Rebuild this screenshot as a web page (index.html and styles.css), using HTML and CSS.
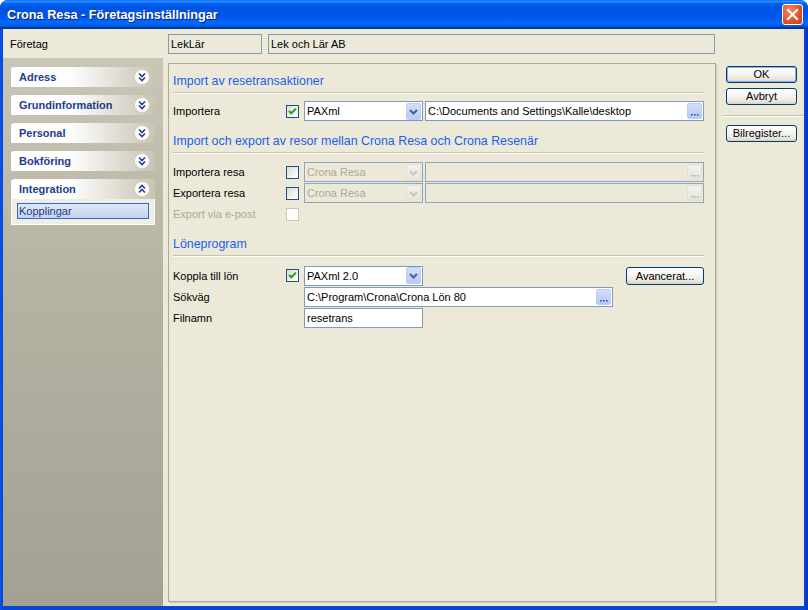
FILE: index.html
```html
<!DOCTYPE html>
<html lang="sv">
<head>
<meta charset="utf-8">
<title>Crona Resa - Företagsinställningar</title>
<link rel="stylesheet" href="styles.css">
</head>
<body>
<div class="window">
  <div class="titlebar">
    <span class="title">Crona Resa - Företagsinställningar</span>
    <div class="close"><svg width="19" height="19" viewBox="0 0 19 19"><path d="M5 5 L14 14 M14 5 L5 14" stroke="#fff" stroke-width="2.2" stroke-linecap="square"/></svg></div>
  </div>
  <div class="client">
    <div class="companyrow">
      <span class="company-label">Företag</span>
      <div class="ro-field code">LekLär</div>
      <div class="ro-field name">Lek och Lär AB</div>
    </div>
    <div class="body">
      <aside class="sidebar">
        <div class="group">
          <div class="group-head"><span>Adress</span><svg class="chev" width="16" height="16" viewBox="0 0 16 16"><circle cx="8" cy="8" r="7.5" fill="#fff" stroke="#d2cfbf"/><path d="M5 4.5 L8 7.5 L11 4.5 M5 8.5 L8 11.5 L11 8.5" fill="none" stroke="#21418f" stroke-width="1.6"/></svg></div>
        </div>
        <div class="group">
          <div class="group-head"><span>Grundinformation</span><svg class="chev" width="16" height="16" viewBox="0 0 16 16"><circle cx="8" cy="8" r="7.5" fill="#fff" stroke="#d2cfbf"/><path d="M5 4.5 L8 7.5 L11 4.5 M5 8.5 L8 11.5 L11 8.5" fill="none" stroke="#21418f" stroke-width="1.6"/></svg></div>
        </div>
        <div class="group">
          <div class="group-head"><span>Personal</span><svg class="chev" width="16" height="16" viewBox="0 0 16 16"><circle cx="8" cy="8" r="7.5" fill="#fff" stroke="#d2cfbf"/><path d="M5 4.5 L8 7.5 L11 4.5 M5 8.5 L8 11.5 L11 8.5" fill="none" stroke="#21418f" stroke-width="1.6"/></svg></div>
        </div>
        <div class="group">
          <div class="group-head"><span>Bokföring</span><svg class="chev" width="16" height="16" viewBox="0 0 16 16"><circle cx="8" cy="8" r="7.5" fill="#fff" stroke="#d2cfbf"/><path d="M5 4.5 L8 7.5 L11 4.5 M5 8.5 L8 11.5 L11 8.5" fill="none" stroke="#21418f" stroke-width="1.6"/></svg></div>
        </div>
        <div class="group">
          <div class="group-head"><span>Integration</span><svg class="chev" width="16" height="16" viewBox="0 0 16 16"><circle cx="8" cy="8" r="7.5" fill="#fff" stroke="#d2cfbf"/><path d="M5 7.5 L8 4.5 L11 7.5 M5 11.5 L8 8.5 L11 11.5" fill="none" stroke="#21418f" stroke-width="1.6"/></svg></div>
          <div class="group-body"><div class="item selected">Kopplingar</div></div>
        </div>
      </aside>

      <main class="content">
        <div class="panel">
          <section class="section first">
            <h2 class="heading">Import av resetransaktioner</h2>
            <div class="sep"></div>
            <div class="rows">
              <div class="row">
                <span class="lbl">Importera</span>
                <span class="cb"><svg width="13" height="13" viewBox="0 0 13 13"><path d="M3 6 L5.3 8.3 L10 3.6" fill="none" stroke="#21a121" stroke-width="2"/></svg></span>
                <div class="combo"><span class="val">PAXml</span><span class="dd"><svg width="15" height="17" viewBox="0 0 15 17"><path d="M4 7 L7.5 10.5 L11 7" fill="none" stroke="#4d6185" stroke-width="2"/></svg></span></div>
                <div class="field path"><span class="val">C:\Documents and Settings\Kalle\desktop</span><span class="ell"><svg width="15" height="16" viewBox="0 0 15 16"><path d="M4 11h1.5v1.5H4z M7 11h1.5v1.5H7z M10 11h1.5v1.5H10z" fill="#2b4a8c"/></svg></span></div>
              </div>
            </div>
          </section>

          <section class="section">
            <h2 class="heading">Import och export av resor mellan Crona Resa och Crona Resenär</h2>
            <div class="sep"></div>
            <div class="rows">
              <div class="row">
                <span class="lbl">Importera resa</span>
                <span class="cb"></span>
                <div class="combo disabled"><span class="val">Crona Resa</span><span class="dd"><svg width="15" height="17" viewBox="0 0 15 17"><path d="M4 7 L7.5 10.5 L11 7" fill="none" stroke="#c9c7ba" stroke-width="2"/></svg></span></div>
                <div class="field path disabled"><span class="val"></span><span class="ell"><svg width="15" height="16" viewBox="0 0 15 16"><path d="M4 11h1.5v1.5H4z M7 11h1.5v1.5H7z M10 11h1.5v1.5H10z" fill="#aca899"/></svg></span></div>
              </div>
              <div class="row">
                <span class="lbl">Exportera resa</span>
                <span class="cb"></span>
                <div class="combo disabled"><span class="val">Crona Resa</span><span class="dd"><svg width="15" height="17" viewBox="0 0 15 17"><path d="M4 7 L7.5 10.5 L11 7" fill="none" stroke="#c9c7ba" stroke-width="2"/></svg></span></div>
                <div class="field path disabled"><span class="val"></span><span class="ell"><svg width="15" height="16" viewBox="0 0 15 16"><path d="M4 11h1.5v1.5H4z M7 11h1.5v1.5H7z M10 11h1.5v1.5H10z" fill="#aca899"/></svg></span></div>
              </div>
              <div class="row">
                <span class="lbl dim">Export via e-post</span>
                <span class="cb off"></span>
              </div>
            </div>
          </section>

          <section class="section">
            <h2 class="heading">Löneprogram</h2>
            <div class="sep"></div>
            <div class="rows">
              <div class="row tall">
                <span class="lbl">Koppla till lön</span>
                <span class="cb"><svg width="13" height="13" viewBox="0 0 13 13"><path d="M3 6 L5.3 8.3 L10 3.6" fill="none" stroke="#21a121" stroke-width="2"/></svg></span>
                <div class="combo"><span class="val">PAXml 2.0</span><span class="dd"><svg width="15" height="17" viewBox="0 0 15 17"><path d="M4 7 L7.5 10.5 L11 7" fill="none" stroke="#4d6185" stroke-width="2"/></svg></span></div>
                <button class="btn adv">Avancerat...</button>
              </div>
              <div class="row">
                <span class="lbl">Sökväg</span>
                <span class="cb-space"></span>
                <div class="field soek"><span class="val">C:\Program\Crona\Crona Lön 80</span><span class="ell"><svg width="15" height="16" viewBox="0 0 15 16"><path d="M4 11h1.5v1.5H4z M7 11h1.5v1.5H7z M10 11h1.5v1.5H10z" fill="#2b4a8c"/></svg></span></div>
              </div>
              <div class="row">
                <span class="lbl">Filnamn</span>
                <span class="cb-space"></span>
                <div class="field fil"><span class="val">resetrans</span></div>
              </div>
            </div>
          </section>
        </div>
      </main>

      <div class="actions">
        <button class="btn default">OK</button>
        <button class="btn">Avbryt</button>
        <div class="asep"></div>
        <button class="btn">Bilregister...</button>
      </div>
    </div>
  </div>
</div>
</body>
</html>
```

FILE: styles.css
```css
html, body {
  margin: 0;
  padding: 0;
  background: #ffffff;
}

body {
  font-family: "Liberation Sans", Arial, sans-serif;
  font-size: 11px;
  color: #000;
}

.window {
  width: 808px;
  height: 610px;
  display: flex;
  flex-direction: column;
  background: linear-gradient(to right, #0a52ee 0, #0846d8 3px, #0846d8 804px, #0733c6 808px);
  border-radius: 8px 8px 0 0;
  overflow: hidden;
}

.titlebar {
  height: 29px;
  flex: none;
  display: flex;
  align-items: center;
  padding: 0 5px 0 7px;
  background: linear-gradient(to bottom, #0058ee 0%, #3593ff 4%, #288eff 6%, #127dff 8%, #036ffc 10%, #0262ee 14%, #0057e5 20%, #0054e3 24%, #0055eb 56%, #005bf5 66%, #026afe 76%, #0062ef 86%, #0052d6 92%, #0040ab 94%, #003092 100%);
}

.title {
  flex: 1;
  color: #fff;
  font-weight: bold;
  font-size: 12.7px;
  text-shadow: 1px 1px 0 #0a1e8a;
  padding-top: 1px;
}

.close {
  width: 21px;
  height: 21px;
  box-sizing: border-box;
  border: 1px solid #fff;
  border-radius: 3px;
  background: radial-gradient(circle at 35% 30%, #f08a6a 0, #e2552c 55%, #c5401c 100%);
  display: flex;
  align-items: center;
  justify-content: center;
}

.client {
  flex: 1;
  min-height: 0;
  margin: 0 4px 4px 3px;
  background: #ece9d8;
  display: flex;
  flex-direction: column;
}

.companyrow {
  height: 29px;
  flex: none;
  box-sizing: border-box;
  display: flex;
  align-items: flex-start;
  padding: 5px 0 0 7px;
}

.company-label {
  width: 158px;
  line-height: 20px;
}

.ro-field {
  height: 20px;
  box-sizing: border-box;
  border: 1px solid #7f9db9;
  line-height: 18px;
  padding-left: 2px;
}

.ro-field.code { width: 94px; }
.ro-field.name { width: 447px; margin-left: 6px; }

.body {
  flex: 1;
  min-height: 0;
  display: flex;
}

/* ---------- sidebar ---------- */
.sidebar {
  width: 160px;
  flex: none;
  box-sizing: border-box;
  padding: 9px 8px 0;
  background: linear-gradient(to bottom, #c9c6b7 0%, #b6b3a3 40%, #a4a193 100%);
}

.group { margin-bottom: 8px; }

.group-head {
  height: 20px;
  display: flex;
  align-items: center;
  justify-content: space-between;
  padding: 0 5px 0 8px;
  border-radius: 3px 3px 0 0;
  background: linear-gradient(to right, #ffffff 0%, #ffffff 40%, #c7c4b3 100%);
  color: #1d3c8a;
  font-weight: bold;
  font-size: 11px;
}

.chev { display: block; }

.group-body {
  background: #f0eee2;
  border: 1px solid #ffffff;
  border-top: none;
  padding: 4px 5px 5px;
}

.item {
  height: 16px;
  line-height: 14px;
  box-sizing: border-box;
  padding-left: 1px;
  color: #263f7c;
}

.item.selected {
  border: 1px solid #316ac5;
  background: linear-gradient(to bottom, #dfe7f6, #c3d3ee);
}

/* ---------- content ---------- */
.content {
  width: 555px;
  flex: none;
  box-sizing: border-box;
  padding: 5px 0 4px 5px;
  display: flex;
}

.panel {
  width: 548px;
  box-sizing: border-box;
  border: 1px solid #aca899;
  box-shadow: 1px 1px 0 #d5d2c2, 2px 2px 0 #e2dfcf;
  background: #ece9d8;
  padding: 7px 11px 0 4px;
}

.section { margin-top: 10px; }
.section.first { margin-top: 0; }

.heading {
  margin: 0;
  height: 20px;
  line-height: 20px;
  font-weight: normal;
  font-size: 12.4px;
  color: #1a5fee;
  white-space: nowrap;
}

.sep {
  margin-top: 1px;
  height: 0;
  border-top: 1px solid #c5c2b2;
  border-bottom: 1px solid #ffffff;
}

.rows {
  padding-top: 8px;
  display: flex;
  flex-direction: column;
  gap: 1px;
}

.section.first .rows { padding-top: 7px; }

.row {
  height: 20px;
  display: flex;
  align-items: center;
}

.row.tall { height: 21px; }
.row.tall .adv { margin-top: 2px; }

.lbl {
  width: 113px;
  flex: none;
  white-space: nowrap;
}

.lbl.dim { color: #aca899; }

.cb {
  width: 13px;
  height: 13px;
  flex: none;
  box-sizing: border-box;
  border: 1px solid #1c5180;
  background: linear-gradient(135deg, #dcdcd5 0%, #f2f2ee 60%, #ffffff 100%);
  margin-right: 5px;
  display: block;
}

.cb svg { display: block; margin: -1px; }

.cb.off {
  border-color: #cac8bb;
  background: #ffffff;
}

.cb-space {
  width: 18px;
  flex: none;
}

.combo, .field {
  height: 20px;
  box-sizing: border-box;
  border: 1px solid #7f9db9;
  background: #fff;
  display: flex;
  align-items: center;
  flex: none;
}

.combo { width: 119px; }

.val {
  flex: 1;
  padding-left: 2px;
  white-space: nowrap;
  overflow: hidden;
}

.dd {
  width: 15px;
  height: 17px;
  margin-right: 1px;
  box-sizing: border-box;
  border: 1px solid #bccdf3;
  border-radius: 2px;
  background: linear-gradient(to bottom, #d2defc 0%, #b8cbf8 100%);
}

.dd svg, .ell svg { display: block; margin: -1px; }

.ell {
  width: 15px;
  height: 16px;
  margin-right: 1px;
  box-sizing: border-box;
  border: 1px solid #bccdf3;
  border-radius: 2px;
  background: linear-gradient(to bottom, #d2defc 0%, #b4c8f7 100%);
}

.field.path { width: 279px; margin-left: 2px; }
.field.soek { width: 309px; }
.field.fil { width: 119px; }

.combo.disabled, .field.disabled {
  background: #ece9d8;
  border-color: #8ea6c0;
  color: #aca899;
}

.disabled .dd, .disabled .ell {
  border-color: #e3e1d5;
  background: linear-gradient(to bottom, #f4f3ee, #e6e4da);
}

/* ---------- buttons ---------- */
.btn {
  font-family: "Liberation Sans", Arial, sans-serif;
  font-size: 11px;
  color: #000;
  height: 17px;
  box-sizing: border-box;
  border: 1px solid #003c74;
  border-radius: 3px;
  background: linear-gradient(to bottom, #ffffff 0%, #f5f4ef 50%, #e6e3d6 85%, #d6d0c5 100%);
  padding: 0;
  line-height: 15px;
  display: block;
}

.btn.default {
  box-shadow: inset 0 0 0 1px #8cb2ec;
}

.adv {
  width: 78px;
  height: 18px;
  margin-left: auto;
  align-self: flex-start;
}

.actions {
  flex: 1;
  box-sizing: border-box;
  padding: 8px 4px 0 8px;
  display: flex;
  flex-direction: column;
}

.actions .btn {
  width: 71px;
}

.actions .btn + .btn { margin-top: 5px; }

.asep {
  margin: 10px -4px 8px -4px;
  height: 0;
  border-top: 1px solid #c5c2b2;
  border-bottom: 1px solid #ffffff;
}
```
